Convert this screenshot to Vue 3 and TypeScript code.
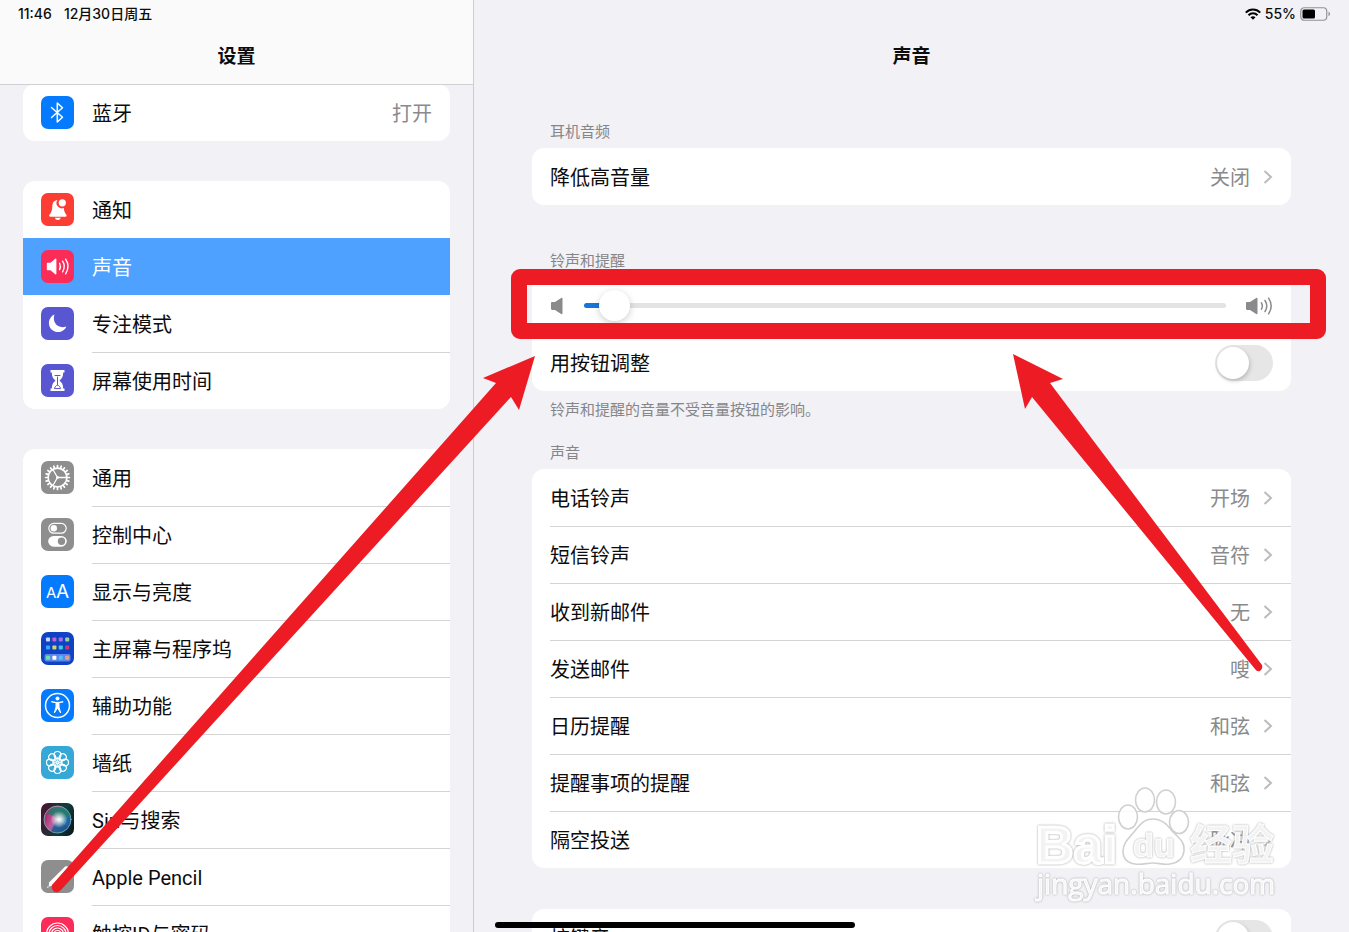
<script setup lang="ts">
import { ref } from 'vue'

interface NavItem {
  icon: string
  label: string
  color: string
  value?: string
  active?: boolean
}

interface SoundItem {
  label: string
  value: string
}

const groups: NavItem[][] = [
  [{ icon: 'bluetooth', label: '蓝牙', color: 'blue', value: '打开' }],
  [
    { icon: 'bell', label: '通知', color: 'red' },
    { icon: 'sound', label: '声音', color: 'pink', active: true },
    { icon: 'moon', label: '专注模式', color: 'indigo' },
    { icon: 'hourglass', label: '屏幕使用时间', color: 'indigo' },
  ],
  [
    { icon: 'gear', label: '通用', color: 'gray' },
    { icon: 'switches', label: '控制中心', color: 'gray' },
    { icon: 'display', label: '显示与亮度', color: 'blue' },
    { icon: 'home', label: '主屏幕与程序坞', color: 'navy' },
    { icon: 'access', label: '辅助功能', color: 'blue' },
    { icon: 'flower', label: '墙纸', color: 'cyan' },
    { icon: 'siri', label: 'Siri与搜索', color: 'dark' },
    { icon: 'pencil', label: 'Apple Pencil', color: 'gray' },
    { icon: 'touch', label: '触控ID与密码', color: 'pink' },
  ],
]

const sounds: SoundItem[] = [
  { label: '电话铃声', value: '开场' },
  { label: '短信铃声', value: '音符' },
  { label: '收到新邮件', value: '无' },
  { label: '发送邮件', value: '嗖' },
  { label: '日历提醒', value: '和弦' },
  { label: '提醒事项的提醒', value: '和弦' },
  { label: '隔空投送', value: '脉冲' },
]

const appColors = [
  '#c9d8ff', '#c861c0', '#9a70f0', '#9ccf9c',
  '#35a8ff', '#d8d070', '#42c8e0', '#c83a70',
  '#6be0a8', '#ffffff', '#4cc0ff', '#e0a090',
]

const teeth = Array.from({ length: 20 }, (_, i) => i * 18)
const petals = Array.from({ length: 8 }, (_, i) => i * 45)

const volume = ref(1)
const adjustWithButtons = ref(false)
const keyClicks = ref(false)
</script>

<template>
  <div class="screen">
    <aside class="sidebar">
      <header class="side-head">
        <div class="status"><span>11:46</span><span>12月30日周五</span></div>
        <h1 class="title">设置</h1>
      </header>
      <nav class="side-list">
        <div v-for="(group, gi) in groups" :key="gi" class="card">
          <a
            v-for="item in group"
            :key="item.label"
            href="#"
            class="nav-row"
            :class="{ active: item.active }"
          >
            <span class="tile" :class="item.color">
              <svg viewBox="0 0 33 33" fill="none" stroke="#fff" stroke-linecap="round" stroke-linejoin="round">
                <path v-if="item.icon === 'bluetooth'" d="M10.5 11.5 21.5 21.2 16.3 26V7l5.2 4.8L10.5 21.5" stroke-width="1.5" />
                <g v-else-if="item.icon === 'bell'" fill="#fff" stroke="none">
                  <path d="M16.500 7c-3.700.3-5.100 3.200-5.200 6.500-.1 4.200-1 6-2.700 7.900-.8 1-.5 2.300.9 2.300h14.800c1.400 0 1.700-1.300.9-2.300-1.400-1.600-2.100-3.200-2.400-6.400a5.300 5.300 0 0 1-6.300-8z" />
                  <circle cx="21.300" cy="9.800" r="3.600" />
                  <path d="M13.900 24.700h5.800c-.4 1.500-1.500 2.200-2.900 2.200s-2.500-.7-2.900-2.200z" />
                </g>
                <g v-else-if="item.icon === 'sound'" stroke-width="1.400">
                  <path d="M6.500 13.500h3.200l5-4.300v14.600l-5-4.300H6.500z" fill="#fff" />
                  <path d="M18.600 13.300c1 2 1 4.400 0 6.400M21.600 11.200c2 3.200 2 7.400 0 10.600M24.600 9.200c3 4.500 3 10.100 0 14.600" />
                </g>
                <path v-else-if="item.icon === 'moon'" d="M13.500 7.600a9.100 9.100 0 1 0 11.900 11.800c-7.800 3.200-14.800-3.600-11.900-11.800z" fill="#fff" stroke="none" />
                <g v-else-if="item.icon === 'hourglass'">
                  <path d="M9.500 6h14v2.400h-1.300c0 4-1.200 5.900-3.700 8.100 2.500 2.200 3.700 4.100 3.700 8.100h1.300V27h-14v-2.400h1.300c0-4 1.200-5.900 3.700-8.100-2.500-2.200-3.700-4.100-3.700-8.100H9.500z" fill="#fff" stroke="none" />
                  <path d="M14 11.500h5M16.500 13v8M13.500 24.200c.6-1.700 1.700-2.600 3-3.200 1.300.6 2.400 1.500 3 3.200z" stroke="#5856ce" stroke-width="1" />
                </g>
                <g v-else-if="item.icon === 'gear'">
                  <circle cx="16.500" cy="16.500" r="9.400" stroke-width="1.600" />
                  <path v-for="a in teeth" :key="a" d="M16.500 6.400V4.600" stroke-width="1.700" :transform="`rotate(${a} 16.500 16.500)`" />
                  <path d="M16.500 16.500h9M16.500 16.500l-4.600-8M16.500 16.500l-4.600 8" stroke-width="1.300" />
                  <circle cx="16.500" cy="16.500" r="1.400" fill="#fff" stroke="none" />
                </g>
                <g v-else-if="item.icon === 'switches'">
                  <rect x="7.800" y="5.400" width="17.400" height="9.800" rx="4.900" stroke-width="1.200" />
                  <circle cx="12.800" cy="10.300" r="3.200" fill="#fff" stroke="none" />
                  <rect x="7.200" y="17.900" width="18.600" height="10.800" rx="5.400" fill="#fff" stroke="none" />
                  <circle cx="20.500" cy="23.300" r="3.700" fill="#8e8e93" stroke="none" />
                </g>
                <g v-else-if="item.icon === 'display'" class="aa">
                  <text x="5" y="23" font-size="15">A</text>
                  <text x="15" y="23" font-size="19">A</text>
                </g>
                <g v-else-if="item.icon === 'home'" stroke="none">
                  <rect x="3.500" y="22" width="26" height="7.500" rx="2" fill="#5e88e8" />
                  <rect
                    v-for="(c, i) in appColors"
                    :key="i"
                    :x="5 + (i % 4) * 6.4"
                    :y="i < 4 ? 5.500 : i < 8 ? 13.500 : 23.800"
                    width="4"
                    height="4"
                    rx="0.800"
                    :fill="c"
                  />
                </g>
                <g v-else-if="item.icon === 'access'">
                  <circle cx="16.500" cy="16.500" r="12" stroke-width="1.500" />
                  <circle cx="16.500" cy="9.400" r="2" fill="#fff" stroke="none" />
                  <path d="M10.800 12.800l4.200.8v4.500L13.300 24l3.200-5 3.200 5-1.700-5.900v-4.500l4.200-.8-4.200.6h-3z" fill="#fff" stroke-width="1" />
                </g>
                <g v-else-if="item.icon === 'flower'" stroke-width="1.200">
                  <circle v-for="a in petals" :key="a" cx="16.500" cy="8.900" r="3.400" :transform="`rotate(${a} 16.500 16.500)`" />
                  <circle v-for="a in petals" :key="`i${a}`" cx="16.500" cy="13.700" r="2" stroke-width="0.800" :transform="`rotate(${a} 16.500 16.500)`" />
                </g>
                <g v-else-if="item.icon === 'siri'" stroke="none">
                  <defs>
                    <radialGradient id="siriGlow">
                      <stop offset="0" stop-color="#fff" />
                      <stop offset="0.300" stop-color="#fff" stop-opacity="0.750" />
                      <stop offset="1" stop-color="#fff" stop-opacity="0" />
                    </radialGradient>
                    <linearGradient id="siriBall" x1="0" y1="0.300" x2="1" y2="0.700">
                      <stop offset="0" stop-color="#a01e62" />
                      <stop offset="0.350" stop-color="#bf5b9b" />
                      <stop offset="0.650" stop-color="#2f83a0" />
                      <stop offset="1" stop-color="#174fa6" />
                    </linearGradient>
                  </defs>
                  <circle cx="16.500" cy="16.500" r="13.500" fill="url(#siriBall)" stroke="#86b9b4" stroke-width="0.800" />
                  <path d="M6 9.500C13 1 25 3 28.500 12c-5 4-9 2-12 4.500C14 12 9 13 6 9.500z" fill="#1f7a68" opacity="0.850" />
                  <path d="M16.500 16.500 27 24c-4 5-12 7-17 4z" fill="#1b4f8e" opacity="0.700" />
                  <circle cx="18" cy="16.500" r="8.500" fill="url(#siriGlow)" />
                </g>
                <g v-else-if="item.icon === 'pencil'" stroke="none" fill="#fff">
                  <path d="M8.300 22.300 24.200 6.600c2.200-1.400 4.300.7 3 2.900L11.400 25.400l-3.900 1.300z" />
                  <path d="M6.800 26.200l1 1-2 .8z" />
                </g>
                <g v-else stroke-width="1.200">
                  <circle cx="16.500" cy="17" r="11" />
                  <circle cx="16.500" cy="17" r="8.500" />
                  <circle cx="16.500" cy="17" r="6" />
                  <circle cx="16.500" cy="17" r="3.500" />
                </g>
              </svg>
            </span>
            <span class="cell">
              <span>{{ item.label }}</span>
              <span v-if="item.value" class="value">{{ item.value }}</span>
            </span>
          </a>
        </div>
      </nav>
    </aside>

    <main class="detail">
      <div class="status end">
        <svg class="wifi" viewBox="0 0 16 12" fill="none" stroke="#000" stroke-width="2">
          <path d="M.8 4.600c4-4.200 10.400-4.200 14.400 0M3.500 7.300c2.500-2.600 6.500-2.600 9 0" />
          <path d="M8 11.800 5.500 9.300c1.400-1.300 3.600-1.300 5 0z" fill="#000" stroke="none" />
        </svg>
        <span>55%</span>
        <svg class="battery" viewBox="0 0 31 14">
          <rect x="0.750" y="0.750" width="26" height="12.500" rx="3.500" fill="none" stroke="#929297" stroke-width="1.200" />
          <rect x="2.500" y="2.500" width="12.500" height="9" rx="1.500" fill="#000" />
          <path d="M28.500 4.800c2 .5 2 3.900 0 4.400z" fill="#929297" />
        </svg>
      </div>
      <h2 class="title">声音</h2>

      <div class="content">
        <h3 class="caption">耳机音频</h3>
        <div class="card">
          <button type="button" class="row">
            <span class="label">降低高音量</span>
            <span class="value">关闭</span>
            <svg class="chevron" viewBox="0 0 10 16"><path d="M1.500 2l6.500 6-6.500 6" /></svg>
          </button>
        </div>

        <h3 class="caption spaced">铃声和提醒</h3>
        <div class="card">
          <div class="row slider-row">
            <svg class="low" viewBox="0 0 14 18" fill="#8a8a8c">
              <path d="M1 6.200C1 5.500 1.400 5 2.200 5H5l6.200-4c.7-.4 1.300-.1 1.300.7v14.600c0 .8-.6 1.100-1.300.7L5 13H2.200C1.400 13 1 12.500 1 11.800z" />
            </svg>
            <input v-model.number="volume" type="range" min="0" max="40" aria-label="铃声和提醒" class="range" />
            <svg class="high" viewBox="0 0 27 18" fill="none" stroke="#8a8a8c" stroke-width="1.500" stroke-linecap="round">
              <path d="M0 6.200C0 5.500.4 5 1.200 5H4l6.200-4c.7-.4 1.300-.1 1.300.7v14.600c0 .8-.6 1.100-1.300.7L4 13H1.200C.4 13 0 12.500 0 11.800z" fill="#8a8a8c" stroke="none" />
              <path d="M15.400 5.800c1.200 2 1.200 4.400 0 6.400M19 3.500c2.200 3.400 2.200 7.600 0 11M22.600 1.200c3.200 4.800 3.200 10.800 0 15.600" />
            </svg>
            <span class="highlight"></span>
          </div>
          <label class="row plain">
            <span class="label">用按钮调整</span>
            <input v-model="adjustWithButtons" type="checkbox" class="toggle" />
          </label>
        </div>
        <p class="caption note">铃声和提醒的音量不受音量按钮的影响。</p>

        <h3 class="caption close">声音</h3>
        <div class="card">
          <button v-for="s in sounds" :key="s.label" type="button" class="row">
            <span class="label">{{ s.label }}</span>
            <span class="value">{{ s.value }}</span>
            <svg class="chevron" viewBox="0 0 10 16"><path d="M1.500 2l6.500 6-6.500 6" /></svg>
          </button>
        </div>

        <div class="card last">
          <label class="row">
            <span class="label">按键音</span>
            <input v-model="keyClicks" type="checkbox" class="toggle" />
          </label>
        </div>
      </div>
    </main>

    <svg class="watermark" viewBox="0 0 260 130" fill="#fff" fill-opacity="0.850">
      <g stroke="#d0d0d3" stroke-width="1.600">
        <ellipse cx="98" cy="37" rx="9.500" ry="12" />
        <ellipse cx="115" cy="20" rx="9.500" ry="12" />
        <ellipse cx="136" cy="22" rx="9.500" ry="12" />
        <ellipse cx="149" cy="42" rx="9.500" ry="11.500" />
        <path d="M123 39c10 0 15 7 20 13 6 6 12 10 11 19-1 8-7 12-14 13-7 1-11-1-17-1s-11 2-18 1c-7-1-12-5-12-13 0-8 6-13 11-19 5-6 9-13 19-13z" />
      </g>
      <text x="6" y="83" class="wm wm-name">Bai</text>
      <text x="103" y="77" class="wm wm-du">du</text>
      <text x="160" y="80" class="wm wm-cn">经验</text>
      <text x="7" y="114" class="wm wm-url">jingyan.baidu.com</text>
    </svg>

    <svg class="arrows" width="1349" height="932" viewBox="0 0 1349 932" fill="#ed1c24">
      <path d="M535 356 483 378 496 383 52 885Q51 890 55 892 58 893 61 890L511 397 519 410z" />
      <path d="M1013 354 1063 379 1050 383 1262 665Q1263 669 1260 671 1257 672 1255 669L1032 397 1025 409z" />
    </svg>
    <span class="home-bar"></span>
  </div>
</template>

<style>
html,
body {
  background: #f1f1f6;
}
</style>

<style scoped>
.screen {
  position: relative;
  display: grid;
  grid-template-columns: 474px minmax(0, 1fr);
  height: 100vh;
  overflow: hidden;
  background: #f1f1f6;
  color: #0c0c0d;
  font-family: Roboto, "Noto Sans CJK SC", sans-serif;
  font-size: 20px;
  line-height: 28px;
}
.sidebar {
  box-sizing: border-box;
  min-height: 0;
  overflow: hidden;
  border-right: 1px solid #cdcdd2;
}
.side-head {
  position: relative;
  z-index: 1;
  background: #fafafa;
  border-bottom: 1px solid #d0d0d4;
}
.status {
  display: flex;
  align-items: center;
  gap: 12px;
  height: 27px;
  padding: 0 18px;
  font-family: Inter, "Noto Sans CJK SC", sans-serif;
  font-size: 14px;
  font-weight: 500;
}
.status.end {
  justify-content: flex-end;
  gap: 4px;
}
.wifi {
  width: 16px;
  height: 12px;
}
.battery {
  width: 31px;
  height: 14px;
}
.title {
  margin: 0;
  padding-top: 3px;
  font-size: 19px;
  font-weight: 600;
  line-height: 54px;
  text-align: center;
}
.side-list {
  display: grid;
  gap: 40px;
  margin: -1px 23px 0;
}
.card {
  background: #fff;
  border-radius: 12px;
}
.nav-row {
  display: flex;
  align-items: center;
  gap: 18px;
  height: 57px;
  padding-left: 18px;
  color: inherit;
  text-decoration: none;
}
.nav-row.active {
  background: #4fa1ff;
  color: #fff;
}
.tile {
  width: 33px;
  height: 33px;
  border-radius: 7px;
  overflow: hidden;
}
.tile svg {
  display: block;
  width: 33px;
  height: 33px;
}
.blue { background: #047aff; }
.red { background: #fb3d33; }
.pink { background: #fb2c58; }
.indigo { background: #5856d0; }
.gray { background: #8e8e8f; }
.navy { background: #0d43c4; }
.cyan { background: #35a8d8; }
.dark { background: linear-gradient(110deg, #4d1030, #133c3b 60%, #07141e); }
.aa text {
  font-family: Inter, sans-serif;
  fill: #fff;
  stroke: none;
}
.cell {
  box-sizing: border-box;
  flex: 1;
  display: flex;
  justify-content: space-between;
  align-items: center;
  height: 57px;
  padding-top: 2px;
  padding-right: 18px;
  border-top: 1px solid transparent;
}
.nav-row + .nav-row .cell {
  border-color: #d4d4d6;
}
.nav-row.active .cell,
.nav-row.active + .nav-row .cell {
  border-color: transparent;
}
.value {
  color: #8a8a8d;
}
.content {
  padding: 37px 58px 0;
}
.caption {
  margin: 0 18px 6px;
  padding-top: 1px;
  color: #86868a;
  font-size: 15px;
  font-weight: 400;
  line-height: 20px;
}
.spaced {
  margin-top: 45px;
}
.note {
  margin-top: 8px;
}
.close {
  margin-top: 22px;
}
.row {
  position: relative;
  box-sizing: border-box;
  display: flex;
  align-items: center;
  width: 100%;
  height: 57px;
  padding: 0 18px;
  border: 0;
  background: none;
  color: inherit;
  font: inherit;
  text-align: left;
}
.row + .row::before {
  content: "";
  position: absolute;
  top: 0;
  right: 0;
  left: 18px;
  height: 1px;
  background: #d4d4d6;
}
.row .label {
  flex: 1;
}
.row .label,
.row .value {
  padding-top: 3px;
}
.chevron {
  width: 10px;
  height: 16px;
  margin-left: 13px;
  fill: none;
  stroke: #bcbcc0;
  stroke-width: 2;
}
.last {
  margin-top: 41px;
}
.slider-row {
  gap: 20px;
}
.low {
  width: 14px;
  height: 18px;
}
.high {
  width: 27px;
  height: 18px;
}
.range {
  appearance: none;
  flex: 1;
  min-width: 0;
  height: 32px;
  margin: 0;
  background: none;
}
.range::-webkit-slider-runnable-track {
  height: 5px;
  border-radius: 3px;
  background: linear-gradient(#1976d8, #1976d8) left / 20px 5px no-repeat, #e3e3e4;
}
.range::-webkit-slider-thumb {
  appearance: none;
  width: 31px;
  height: 31px;
  margin-top: -13px;
  border-radius: 50%;
  background: #fff;
  box-shadow: 0 2px 7px rgba(0, 0, 0, 0.2);
}
.toggle {
  appearance: none;
  width: 58px;
  height: 36px;
  margin: 0;
  padding: 2px;
  box-sizing: border-box;
  border-radius: 18px;
  background: #e6e6e7;
}
.toggle::before {
  content: "";
  display: block;
  width: 32px;
  height: 32px;
  border-radius: 50%;
  background: #fff;
  box-shadow: 1px 2px 4px rgba(0, 0, 0, 0.2);
}
.toggle:checked {
  background: #34c759;
}
.toggle:checked::before {
  margin-left: auto;
}
.highlight {
  position: absolute;
  inset: -8px -35px -5px -21px;
  border: 16px solid #ed1c24;
  border-radius: 9px;
  pointer-events: none;
}
.row.plain::before {
  display: none;
}
.watermark {
  position: absolute;
  top: 780px;
  right: 59px;
  width: 260px;
  height: 130px;
  pointer-events: none;
}
.wm {
  fill: #fff;
  stroke: #fff;
  stroke-width: 1;
  filter: drop-shadow(0 0 1px #a4a4a8);
}
.wm-name,
.wm-du {
  font-family: "Liberation Sans", sans-serif;
  font-weight: 700;
}
.wm-name {
  font-size: 52px;
  stroke-width: 3;
}
.wm-du {
  font-size: 34px;
}
.wm-cn {
  font-family: "Noto Sans CJK SC", sans-serif;
  font-size: 42px;
  font-weight: 700;
}
.wm-url {
  font-family: "Open Sans", sans-serif;
  font-size: 28px;
}
.arrows {
  position: absolute;
  top: 0;
  left: 0;
  pointer-events: none;
}
.home-bar {
  position: absolute;
  bottom: 4px;
  left: 50%;
  width: 360px;
  height: 6px;
  margin-left: -180px;
  border-radius: 3px;
  background: #000;
}
</style>
